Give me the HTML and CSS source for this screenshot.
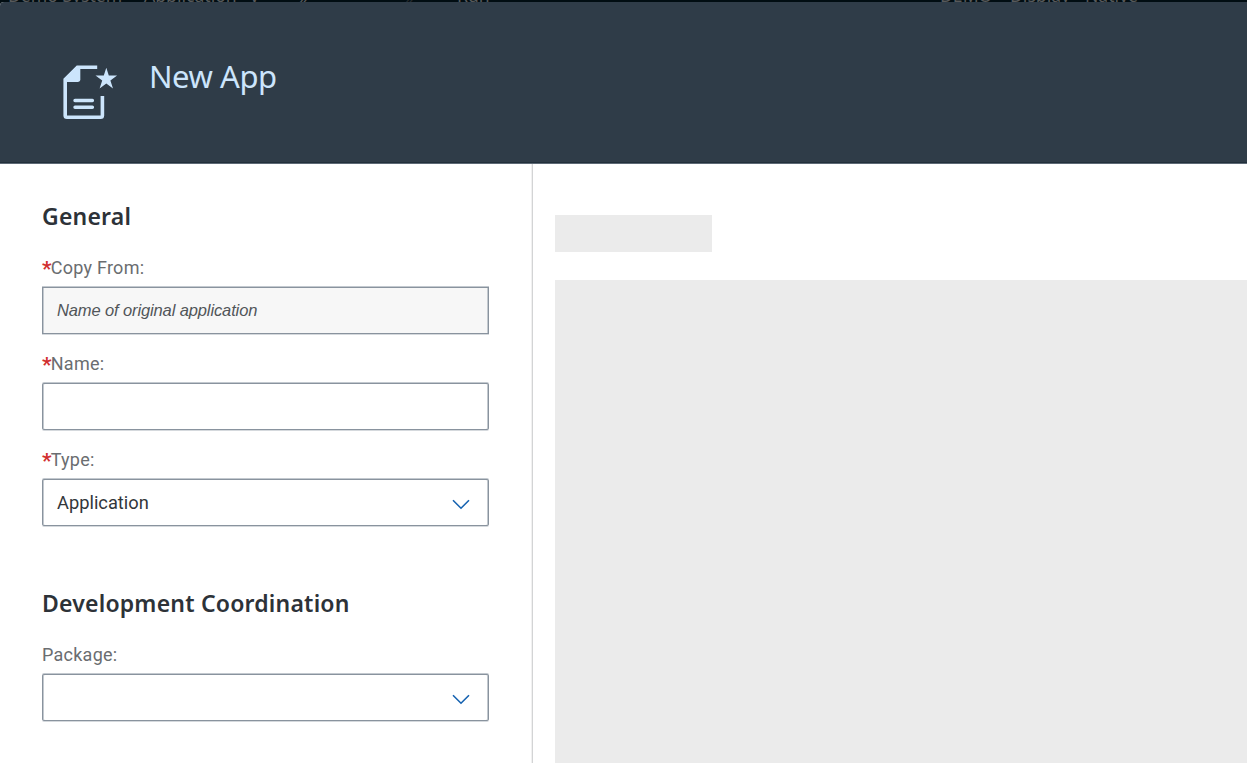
FILE: index.html
```html
<!DOCTYPE html>
<html lang="en">
<head>
<meta charset="utf-8">
<title>New App</title>
<link rel="stylesheet" href="styles.css">
</head>
<body>
<div class="shell">
  <span class="shell-item s1">Demo System</span>
  <span class="shell-item s2">Application</span>
  <span class="shell-item s3">v</span>
  <span class="shell-item s4">»</span>
  <span class="shell-item s5">001</span>
  <span class="shell-item s6">»</span>
  <span class="shell-item s7">Run</span>
  <span class="shell-item s8">DEMO</span>
  <span class="shell-item s9">Display</span>
  <span class="shell-item s10">Native</span>
</div>
<div class="dialog">
  <header class="header">
    <svg class="app-icon" width="56" height="56" viewBox="62 64 56 56" fill="none">
      <path d="M97.2 67.3H77.5L65.2 79.5V115.5Q65.2 117.3 67 117.3H100.6Q102.4 117.3 102.4 115.5V96" stroke="#cce5fc" stroke-width="3.6"/>
      <path d="M77.5 66.5H80.3V79.3Q80.3 82 77.5 82H64.5V79.5Z" fill="#cce5fc"/>
      <path d="M75 100.5H92.4M75 107.3H92.4" stroke="#cce5fc" stroke-width="3.4" stroke-linecap="round"/>
      <path d="M106.3 67.8L108.8 75.6H117.1L110.4 80.4L113 88.5L106.3 83.5L99.6 88.5L102.2 80.4L95.5 75.6H103.8Z" fill="#cce5fc"/>
    </svg>
    <h1 class="title">New App</h1>
  </header>
  <main class="content">
    <form class="form">
      <section class="section">
        <h2 class="heading">General</h2>
        <div class="field">
          <label class="label"><b class="required">*</b>Copy From:</label>
          <div class="box readonly">Name of original application</div>
        </div>
        <div class="field">
          <label class="label"><b class="required">*</b>Name:</label>
          <div class="box"></div>
        </div>
        <div class="field">
          <label class="label"><b class="required">*</b>Type:</label>
          <div class="box select"><span class="value">Application</span>
            <svg class="chevron" width="18" height="11" viewBox="0 0 18 11" fill="none"><path d="M1 1.3L9 9.2L17 1.3" stroke="#1562b0" stroke-width="1.6"/></svg>
          </div>
        </div>
      </section>
      <section class="section">
        <h2 class="heading">Development Coordination</h2>
        <div class="field">
          <label class="label">Package:</label>
          <div class="box select"><span class="value"></span>
            <svg class="chevron" width="18" height="11" viewBox="0 0 18 11" fill="none"><path d="M1 1.3L9 9.2L17 1.3" stroke="#1562b0" stroke-width="1.6"/></svg>
          </div>
        </div>
      </section>
    </form>
    <div class="preview">
      <div class="skeleton-title"></div>
      <div class="skeleton-body"></div>
    </div>
  </main>
</div>
</body>
</html>
```
FILE: styles.css
```css
* { box-sizing: border-box; }
body { margin: 0; height: 763px; overflow: hidden; background: #010d12; font-family: Roboto, "Noto Sans", sans-serif; display: flex; flex-direction: column; }
.shell { height: 2px; flex: none; position: relative; overflow: hidden; }
.shell-item { position: absolute; top: -15px; font: 17.6px/20px "Noto Sans", sans-serif; color: #57595a; white-space: nowrap; }
.s1 { left: 8px; }
.s2 { left: 144px; }
.s3 { left: 250px; }
.s4 { left: 299px; top: -13px; }
.s5 { left: 351px; font-size: 13px; color: #24292c; }
.s6 { left: 405px; top: -13px; color: #24292c; }
.s7 { left: 457px; }
.s8 { left: 940px; }
.s9 { left: 1010px; }
.s10 { left: 1085px; }
.dialog { flex: 1; display: flex; flex-direction: column; background: #fff; border-radius: 4px 0 0 0; overflow: hidden; min-height: 0; }
.header { height: 162px; flex: none; display: flex; gap: 31px; padding: 62px 0 0 62px; background: #2f3c48; border-bottom: 1px solid #5d6975; box-shadow: inset 0 -1px #22303b; }
.app-icon { flex: none; display: block; }
.title { margin: -8px 0 0; font: 400 31px/40px "Noto Sans", sans-serif; letter-spacing: -0.45px; color: #cce5fc; }
.content { flex: 1; display: flex; min-height: 0; }
.form { width: 533px; flex: none; padding: 36px 43px 0 42px; border-right: 1px solid #d3d4d5; box-shadow: inset -1px 0 #f1f1f1; }
.section { height: 387px; }
.heading { margin: 0 0 16px; height: 34px; font: 600 23px/32px "Noto Sans", sans-serif; letter-spacing: 0.2px; color: #2d3238; white-space: nowrap; }
.field { height: 96px; }
.label { display: block; height: 37px; line-height: 35px; font-size: 18px; letter-spacing: 0.25px; color: #6a6d70; white-space: nowrap; }
.required { color: #d12f2f; font-size: 21px; line-height: 1; vertical-align: -2px; letter-spacing: -0.8px; }
.box { height: 47px; border: 1px solid #89939e; border-radius: 2px; background: #fff; box-shadow: 0 -1px #c3c9cf, 0 1px #d5d9dd, inset 1px 0 #c3c9cf, inset -1px 0 #c3c9cf; }
.readonly { background: #f7f7f7; border-radius: 0; padding-left: 14px; font: italic 16.5px/45px "Liberation Sans", sans-serif; letter-spacing: -0.12px; color: #515559; }
.select { display: flex; justify-content: space-between; padding: 0 18px 0 14px; }
.value { font-size: 18.3px; line-height: 45px; color: #32363a; }
.chevron { margin-top: 19px; }
.preview { flex: 1; display: flex; flex-direction: column; gap: 28px; padding: 51px 0 0 22px; }
.skeleton-title { width: 157px; height: 37px; background: #ebebeb; }
.skeleton-body { flex: 1; background: #ebebeb; }
```
